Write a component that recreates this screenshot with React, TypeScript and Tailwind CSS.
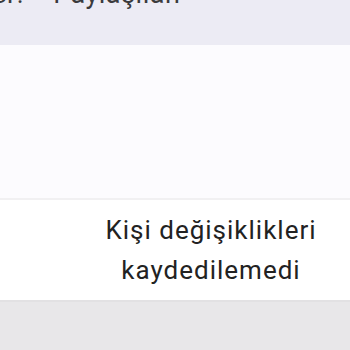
export default function App() {
  return (
    <div className="w-[350px] h-[350px] overflow-hidden flex flex-col bg-[#fcfbfe]" style={{ fontFamily: 'Roboto, "Noto Sans", sans-serif' }}>
      {/* top bar, text cut off by the screen edge */}
      <div className="h-[45px] bg-[#ecebf4] overflow-hidden shrink-0">
        <div className="-mt-[19px] text-[27px] leading-[26px] tracking-[0.5px] text-[#3a3a3c] whitespace-nowrap">
          <span className="-ml-[8px]">el?</span>
          <span className="ml-[26px]">Paylaşılan</span>
        </div>
      </div>

      <div className="flex-1 bg-[#fcfbfe]" />

      {/* toast panel */}
      <div className="border-t-2 border-[#f1f0f2] bg-white h-[102px] shrink-0 flex items-center justify-end pr-[19px]">
        <p className="w-[240px] text-center text-[26px] leading-[40px] tracking-[1px] text-[#222222]">
          Kişi değişiklikleri kaydedilemedi
        </p>
      </div>

      <div className="h-[50px] shrink-0 border-t-2 border-[#e2e1e3] bg-[#e8e7e9]" />
    </div>
  )
}
